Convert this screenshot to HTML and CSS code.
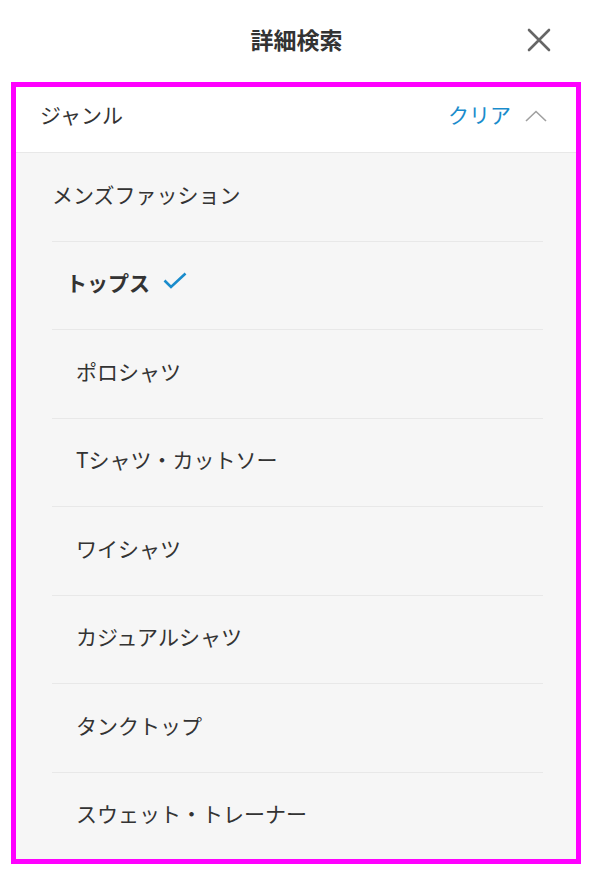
FILE: index.html
```html
<!DOCTYPE html>
<html lang="ja">
<head>
  <meta charset="UTF-8" />
  <title>詳細検索</title>
  <link rel="stylesheet" href="styles.css">
</head>
<body>

  <!-- Header -->
  <header class="search-header">
    <h1>詳細検索</h1>
    <button class="close-btn" aria-label="閉じる">
      <svg width="24" height="24" viewBox="0 0 24 24">
        <path d="M2 2 L22 22 M22 2 L2 22" stroke="#666" stroke-width="2.6" fill="none" stroke-linecap="round"/>
      </svg>
    </button>
  </header>

  <!-- Genre panel -->
  <section class="genre-box">
    <div class="genre-head">
      <span class="genre-title">ジャンル</span>
      <div class="genre-actions">
        <span class="clear-link">クリア</span>
        <svg class="chevron" width="22" height="12" viewBox="0 0 22 12">
          <path d="M1 11 L11 1.5 L21 11" stroke="#a0a0a0" stroke-width="1.6" fill="none"/>
        </svg>
      </div>
    </div>

    <ul class="genre-list">
      <li class="level-1">メンズファッション</li>
      <li class="level-2 selected">トップス
        <svg class="check" width="24" height="17" viewBox="0 0 24 17">
          <path d="M1.5 8.5 L8 15 L22.5 1.5" stroke="#1a8ccc" stroke-width="2.6" fill="none"/>
        </svg>
      </li>
      <li class="level-3">ポロシャツ</li>
      <li class="level-3">Tシャツ・カットソー</li>
      <li class="level-3">ワイシャツ</li>
      <li class="level-3">カジュアルシャツ</li>
      <li class="level-3">タンクトップ</li>
      <li class="level-3">スウェット・トレーナー</li>
    </ul>
  </section>

</body>
</html>
```

FILE: styles.css
```css
body {
  margin: 0;
  font-family: "Noto Sans CJK JP", "Noto Sans", sans-serif;
  color: #333;
  background: #fff;
}

.search-header {
  height: 82px;
  box-sizing: border-box;
  padding-bottom: 4px;
  display: flex;
  align-items: center;
  justify-content: center;
  position: relative;
}

.search-header h1 {
  margin: 0;
  font-size: 23px;
  font-weight: bold;
  color: #333;
}

.close-btn {
  position: absolute;
  right: 42px;
  top: 28px;
  padding: 0;
  border: none;
  background: none;
  cursor: pointer;
}

.close-btn svg {
  display: block;
}

.genre-box {
  margin: 0 12px 16px 11px;
  border: 5px solid #ff00ff;
  background: #f6f6f6;
}

.genre-head {
  height: 66px;
  box-sizing: border-box;
  display: flex;
  align-items: center;
  justify-content: space-between;
  padding: 0 29px 11px 24px;
  background: #fff;
  border-bottom: 1px solid #e8e8e8;
}

.genre-title {
  font-size: 21px;
  color: #333;
}

.genre-actions {
  display: flex;
  align-items: center;
  gap: 14px;
}

.clear-link {
  font-size: 21px;
  color: #1a8ccc;
  cursor: pointer;
}

.chevron {
  display: block;
  margin-top: 4px;
}

.genre-list {
  list-style: none;
  margin: 0;
  padding: 0 33px 0 36px;
}

.genre-list li {
  height: 88.5px;
  box-sizing: border-box;
  padding-bottom: 6px;
  display: flex;
  align-items: center;
  font-size: 21px;
  border-bottom: 1px solid #e8e8e8;
}

.genre-list li:last-child {
  border-bottom: none;
  height: 86px;
}

.level-1 {
  padding-left: 0;
}

.level-2 {
  padding-left: 14px;
}

.level-3 {
  padding-left: 24px;
}

.selected {
  font-weight: bold;
}

.check {
  margin-left: 13px;
  margin-top: -4px;
}
```
